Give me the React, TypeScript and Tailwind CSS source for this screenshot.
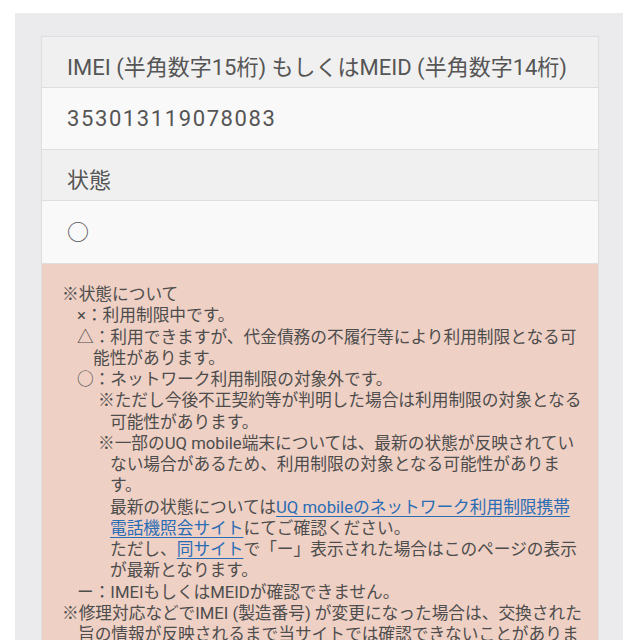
import React from 'react'

const font = "font-['Roboto','Noto_Sans_CJK_JP',sans-serif]"

function HeadRow({ children }: { children: React.ReactNode }) {
  return (
    <div className="h-[51px] bg-[#f0f0f0] border-b border-[#dedede] pl-[25px] pt-[16px] text-[22px] leading-[30px] text-[#555]">
      {children}
    </div>
  )
}

function ValueRow({ children, tall }: { children: React.ReactNode; tall?: boolean }) {
  return (
    <div
      className={`${tall ? 'h-[63px]' : 'h-[62px]'} bg-[#f9f9f9] border-b border-[#dedede] pl-[25px] flex items-center text-[22px] text-[#555]`}
    >
      {children}
    </div>
  )
}

const link = 'text-[#2a6db5] underline underline-offset-[3px]'

export default function App() {
  return (
    <div className={`min-h-[640px] bg-white pt-[13px] ${font}`}>
      <div className="ml-[15px] mr-[17px] bg-[#ebebed] pl-[26px] pr-[24px] pt-[23px] pb-[20px]">
        <div className="border-x border-t border-[#dedede]">
          <HeadRow>IMEI (半角数字15桁) もしくはMEID (半角数字14桁)</HeadRow>
          <ValueRow>
            <span className="tracking-[1.6px]">353013119078083</span>
          </ValueRow>
          <HeadRow>状態</HeadRow>
          <ValueRow tall>○</ValueRow>
          <div className="bg-[#efd0c4] pl-[20px] pr-[6px] pt-[20px] pb-[20px] text-[16.7px] leading-[21.25px] text-[#4d4d4d] whitespace-nowrap">
            <p className="pl-[16px] indent-[-16px]">※状態について</p>
            <div className="pl-[15px]">
              <p className="pl-[16px] indent-[-16px]">×：利用制限中です。</p>
              <p className="pl-[16px] indent-[-16px]">
                △：利用できますが、代金債務の不履行等により利用制限となる可<br />能性があります。
              </p>
              <p className="pl-[16px] indent-[-16px]">○：ネットワーク利用制限の対象外です。</p>
              <div className="pl-[21px]">
                <p className="pl-[12px] indent-[-12px]">
                  ※ただし今後不正契約等が判明した場合は利用制限の対象となる<br />可能性があります。
                </p>
                <p className="pl-[12px] indent-[-12px]">
                  ※一部のUQ mobile端末については、最新の状態が反映されてい<br />ない場合があるため、利用制限の対象となる可能性がありま<br />す。
                </p>
                <p className="pl-[12px]">
                  最新の状態については<a className={link}>UQ mobileのネットワーク利用制限携帯</a>
                  <br />
                  <a className={link}>電話機照会サイト</a>にてご確認ください。
                </p>
                <p className="pl-[12px]">
                  ただし、<a className={link}>同サイト</a>で「ー」表示された場合はこのページの表示<br />が最新となります。
                </p>
              </div>
              <p className="pl-[16px] indent-[-16px]">ー：IMEIもしくはMEIDが確認できません。</p>
            </div>
            <p className="pl-[16px] indent-[-16px]">
              ※修理対応などでIMEI (製造番号) が変更になった場合は、交換された<br />旨の情報が反映されるまで当サイトでは確認できないことがありま<br />す。
            </p>
          </div>
        </div>
      </div>
    </div>
  )
}
